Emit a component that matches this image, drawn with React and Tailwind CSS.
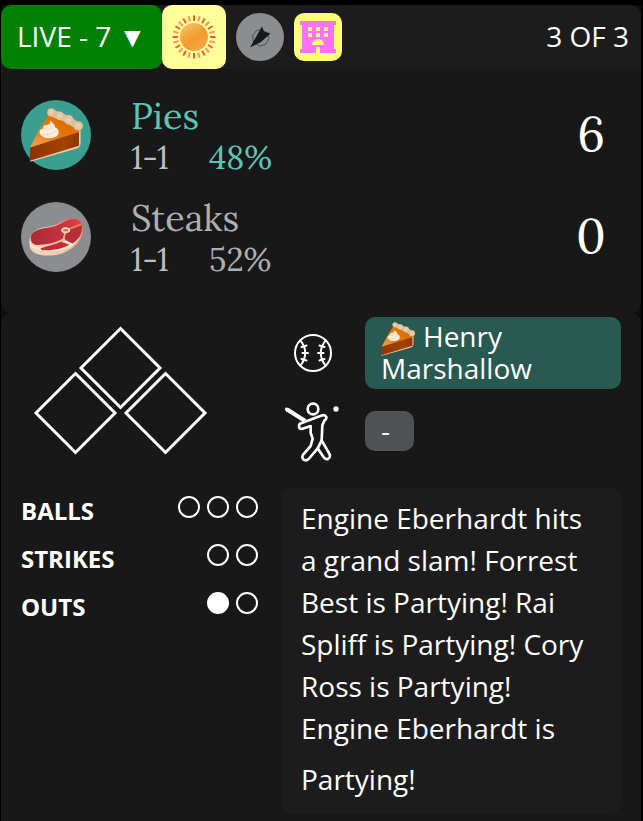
const SUN_RAYS = Array.from({ length: 24 }, (_, i) => i * 15);

function SunIcon() {
  return (
    <svg viewBox="0 0 64 64" className="size-16" aria-hidden="true">
      <defs>
        <linearGradient id="sun" x1="0.2" y1="0" x2="0.8" y2="1">
          <stop offset="0" stopColor="#f5c267" />
          <stop offset="0.55" stopColor="#f39a2c" />
          <stop offset="1" stopColor="#f6a850" />
        </linearGradient>
      </defs>
      {SUN_RAYS.map((a, i) => (
        <path
          key={a}
          d="M32 10.5V16"
          stroke={i % 2 ? "#f39562" : "#e9601c"}
          strokeWidth="2"
          transform={`rotate(${a} 32 32)`}
        />
      ))}
      <circle cx="32" cy="32" r="14" fill="url(#sun)" />
    </svg>
  );
}

function WindIcon() {
  return (
    <svg viewBox="0 0 48 48" className="size-12" aria-hidden="true">
      <path
        d="M24.5 16.500L31 19.500L33 25.500L29.500 31.500L23.500 33L17.500 29L16.500 23L20 18Z"
        fill="none"
        stroke="#4d4f51"
        strokeWidth="1"
      />
      <path d="M14 34.500L26 13.500L28 18.500L34.500 20.500L25 29Z" fill="#17181a" />
    </svg>
  );
}

function HotelIcon() {
  return (
    <svg viewBox="0 0 48 48" className="size-12" aria-hidden="true">
      <path
        fill="#ff70fb"
        d="M6 8H42V12H40V36H42V40H26V34H22V40H6V36H8V12H6Z"
      />
      <path
        fill="#ffff80"
        d="M14 14h4v4h-4zM22 14h4v4h-4zM30 14h4v4h-4zM14 20h4v4h-4zM22 20h4v4h-4zM30 20h4v4h-4zM18 32a6 6 0 0 1 12 0z"
      />
    </svg>
  );
}

function PieIcon({ className }) {
  return (
    <svg viewBox="0 0 160 160" className={className} aria-hidden="true">
      <defs>
        <linearGradient id="pie-top" x1="0" y1="1" x2="0.8" y2="0.2">
          <stop offset="0" stopColor="#f9a250" />
          <stop offset="0.5" stopColor="#ea7d14" />
          <stop offset="1" stopColor="#dc6a00" />
        </linearGradient>
        <linearGradient id="pie-side" x1="0" y1="0" x2="1" y2="0">
          <stop offset="0" stopColor="#8d3500" />
          <stop offset="0.7" stopColor="#a54300" />
          <stop offset="1" stopColor="#8f3700" />
        </linearGradient>
        <radialGradient id="crust">
          <stop offset="0" stopColor="#ecd5b8" />
          <stop offset="1" stopColor="#dcbe9a" />
        </radialGradient>
      </defs>
      <path d="M2 150L4 159L142 120Q152 116 153 106V66L146 68Z" fill="#ecc9a2" />
      <path d="M3 116L148 70V112L3 156Z" fill="url(#pie-side)" />
      <path d="M58 20L100 28L148 66V71L3 117Q30 62 58 20Z" fill="url(#pie-top)" />
      <path d="M66 14L92 24L118 36L146 54" fill="none" stroke="#dcbe9a" strokeWidth="21" strokeLinecap="round" />
      <g fill="url(#crust)">
        <circle cx="66" cy="13" r="12" />
        <circle cx="91" cy="23" r="13" />
        <circle cx="118" cy="35" r="14" />
        <circle cx="146" cy="53" r="14" />
      </g>
      <path
        d="M62 38C70 42 76 50 78 58C90 64 92 76 82 84C66 93 44 91 34 79C28 70 33 62 43 61C40 53 46 50 54 50C62 49 64 44 62 38Z"
        fill="#fbeedd"
      />
      <path d="M46 62Q62 66 73 55M38 77Q60 83 80 68" fill="none" stroke="#ecd0b0" strokeWidth="2.500" />
    </svg>
  );
}

function SteakIcon() {
  return (
    <svg viewBox="0 0 160 160" className="size-[54px]" aria-hidden="true">
      <defs>
        <linearGradient id="fat" x1="0" y1="1" x2="1" y2="0">
          <stop offset="0" stopColor="#f0dcc0" />
          <stop offset="0.5" stopColor="#f3c0a0" />
          <stop offset="1" stopColor="#e8604c" />
        </linearGradient>
        <linearGradient id="meat" x1="0" y1="0" x2="1" y2="0">
          <stop offset="0" stopColor="#a92b35" />
          <stop offset="0.6" stopColor="#c63340" />
          <stop offset="1" stopColor="#dc4349" />
        </linearGradient>
      </defs>
      <path
        d="M1 94C0 68 26 52 58 49C88 46 100 27 130 24C154 24 162 46 159 66C154 94 134 114 100 128C70 138 28 138 10 122C2 114 2 106 1 94Z"
        fill="url(#fat)"
      />
      <path d="M1 92Q6 108 24 110Q50 112 78 104L100 94L150 82L158 60Q150 92 126 108Q96 124 56 122Q14 120 3 106Z" fill="#f7e8d8" />
      <path
        d="M5 84C3 67 28 54 60 52C92 49 102 30 130 27C144 27 152 33 155 39L118 54Q104 46 96 57Q94 66 104 70L99 86Q66 103 24 104C10 102 6 94 5 84Z"
        fill="url(#meat)"
      />
      <path d="M157 45C158 70 147 90 128 99Q114 94 106 86Q106 74 111 68Q121 66 121 58Z" fill="#b92f39" />
      <path d="M34 113Q70 104 95 94L120 102C98 116 62 121 38 119Z" fill="#c52b39" />
      <ellipse cx="109" cy="60" rx="13" ry="8" fill="#f4dccb" />
      <ellipse cx="109" cy="60" rx="8" ry="4" fill="#d96a5b" />
    </svg>
  );
}

function BasesDiagram() {
  return (
    <svg
      viewBox="0 0 176 130"
      className="h-[130px] w-44"
      fill="none"
      stroke="#fff"
      strokeWidth="3"
      role="img"
      aria-label="Bases empty"
    >
      <path d="M87.500 3.500L127 43L87.500 82.500L48 43Z" />
      <path d="M42.500 48.500L82 88L42.500 127.500L3 88Z" />
      <path d="M132.500 48.500L172 88L132.500 127.500L93 88Z" />
    </svg>
  );
}

function BaseballIcon() {
  return (
    <svg viewBox="0 0 40 40" className="size-10" fill="none" stroke="#fff" strokeWidth="2" strokeLinecap="round" role="img" aria-label="Pitcher">
      <circle cx="20" cy="20" r="18" />
      <path d="M7.500 7.500Q17 20 7.500 32.500M32.500 7.500Q23 20 32.500 32.500" />
      <path d="M8.500 14L13.500 12.500M9.500 20H15M8.500 26L13.500 27.500M31.500 14L26.500 12.500M30.500 20H25M31.500 26L26.500 27.500" />
    </svg>
  );
}

function BatterIcon() {
  return (
    <svg viewBox="18 264 192 192" className="size-16" fill="none" stroke="#fff" strokeWidth="8" strokeLinejoin="round" strokeLinecap="round" role="img" aria-label="Batter">
      <circle cx="114" cy="294" r="16" />
      <circle cx="183" cy="294" r="8" fill="#fff" stroke="none" />
      <path d="M31 290Q35 288 41 291L94 325L84 333L33 301Q27 295 31 290Z" fill="#fff" stroke="none" />
      <path d="M78 337L142 313Q151 311 154 318Q155 324 148 329L142 343L140 388L164 430Q167 440 159 444Q152 446 147 440L128 412L101 444Q92 452 84 444Q80 437 85 430L107 405L113 383L107 366V345L80 354Q72 354 72 345Q72 339 78 337Z" />
      <path d="M140 388L128 412" />
    </svg>
  );
}

function TeamRow({ name, icon, badge, accent, chance, score }) {
  return (
    <div className="flex h-[102px] items-start">
      <div className={`flex size-[70px] shrink-0 items-center justify-center rounded-full ${badge}`}>{icon}</div>
      <div className="ml-10 flex-1 font-['Lora','Liberation_Serif',serif]">
        <div className={`-mt-2 text-4xl leading-[48px] ${accent}`}>{name}</div>
        <div className="flex text-[32px] leading-9">
          <span className="w-[78px] text-[#bebebe]">1-1</span>
          <span className={accent}>{chance}</span>
        </div>
      </div>
      <div className="w-[60px] text-center font-['Lora','Liberation_Serif',serif] text-5xl leading-[68px]">{score}</div>
    </div>
  );
}

function CountRow({ label, total, filled }) {
  return (
    <div className="flex h-12 justify-between">
      <span className="text-2xl leading-[46px] font-bold">{label}</span>
      <span className="mt-2 mr-[3px] flex gap-[7px]" role="img" aria-label={`${filled} of ${total}`}>
        {Array.from({ length: total }, (_, i) => (
          <span key={i} className={`size-[22px] rounded-full border-2 border-white ${i < filled ? "bg-white" : ""}`} />
        ))}
      </span>
    </div>
  );
}

export default function App() {
  return (
    <main className="min-h-screen bg-black pt-[5px] pr-0.5 pl-px font-['Open_Sans','Noto_Sans',sans-serif] text-[28px] text-white">
      <div className="bg-[#0e0e0e]">
        <section className="overflow-hidden rounded-[10px] bg-[#181818]">
          <header className="flex h-16 items-center bg-[#1c1c1c] leading-[62px]">
            <button className="h-16 rounded-[10px] bg-[#008000] px-4 pb-0.5 whitespace-nowrap">LIVE - 7 ▼</button>
            <div className="rounded-[10px] bg-[#ffff9c]"><SunIcon /></div>
            <div className="ml-2.5 rounded-full bg-[#8b8d8f]"><WindIcon /></div>
            <div className="ml-2.5 rounded-[10px] bg-[#ffff7a]"><HotelIcon /></div>
            <span className="ml-auto pr-3 pb-0.5">3 OF 3</span>
          </header>
          <div className="px-5 pt-[31px] pb-[9px]">
            <TeamRow
              name="Pies"
              icon={<PieIcon className="size-[54px]" />}
              badge="bg-[#3a9e90]"
              accent="text-[#5ec5b6]"
              chance="48%"
              score="6"
            />
            <TeamRow
              name="Steaks"
              icon={<SteakIcon />}
              badge="bg-[#8b8d8f]"
              accent="text-[#adafb0]"
              chance="52%"
              score="0"
            />
          </div>
        </section>

        <section className="grid min-h-[508px] grid-cols-[240px_1fr] gap-x-5 rounded-t-[10px] bg-[#181818] px-5 pt-1 pb-[7px]">
          <div className="pt-2 pl-3"><BasesDiagram /></div>
          <div className="grid h-[170px] grid-cols-[64px_1fr] content-start items-center gap-x-5 gap-y-2.5">
            <div className="flex justify-center"><BaseballIcon /></div>
            <div className="rounded-[10px] bg-[#285a52] px-4 pt-[3px] pb-[5px] leading-8">
              <PieIcon className="-my-1 mr-2 inline size-[34px] align-[-5px]" />
              Henry Marshallow
            </div>
            <div><BatterIcon /></div>
            <div className="w-[49px] rounded-[10px] bg-[#505153] px-4 pt-[3px] pb-[5px] leading-8">-</div>
          </div>
          <div>
            <CountRow label="BALLS" total={3} filled={0} />
            <CountRow label="STRIKES" total={2} filled={0} />
            <CountRow label="OUTS" total={2} filled={1} />
          </div>
          <p className="rounded-[10px] bg-[#1c1c1c] px-5 pt-[9px] pb-[13px] leading-[42px]">
            Engine Eberhardt hits a grand slam! Forrest Best is Partying! Rai Spliff is Partying! Cory Ross is
            Partying! Engine Eberhardt is Partying!
            <span className="inline-block h-[41px] w-px" />
          </p>
        </section>
      </div>
    </main>
  );
}
